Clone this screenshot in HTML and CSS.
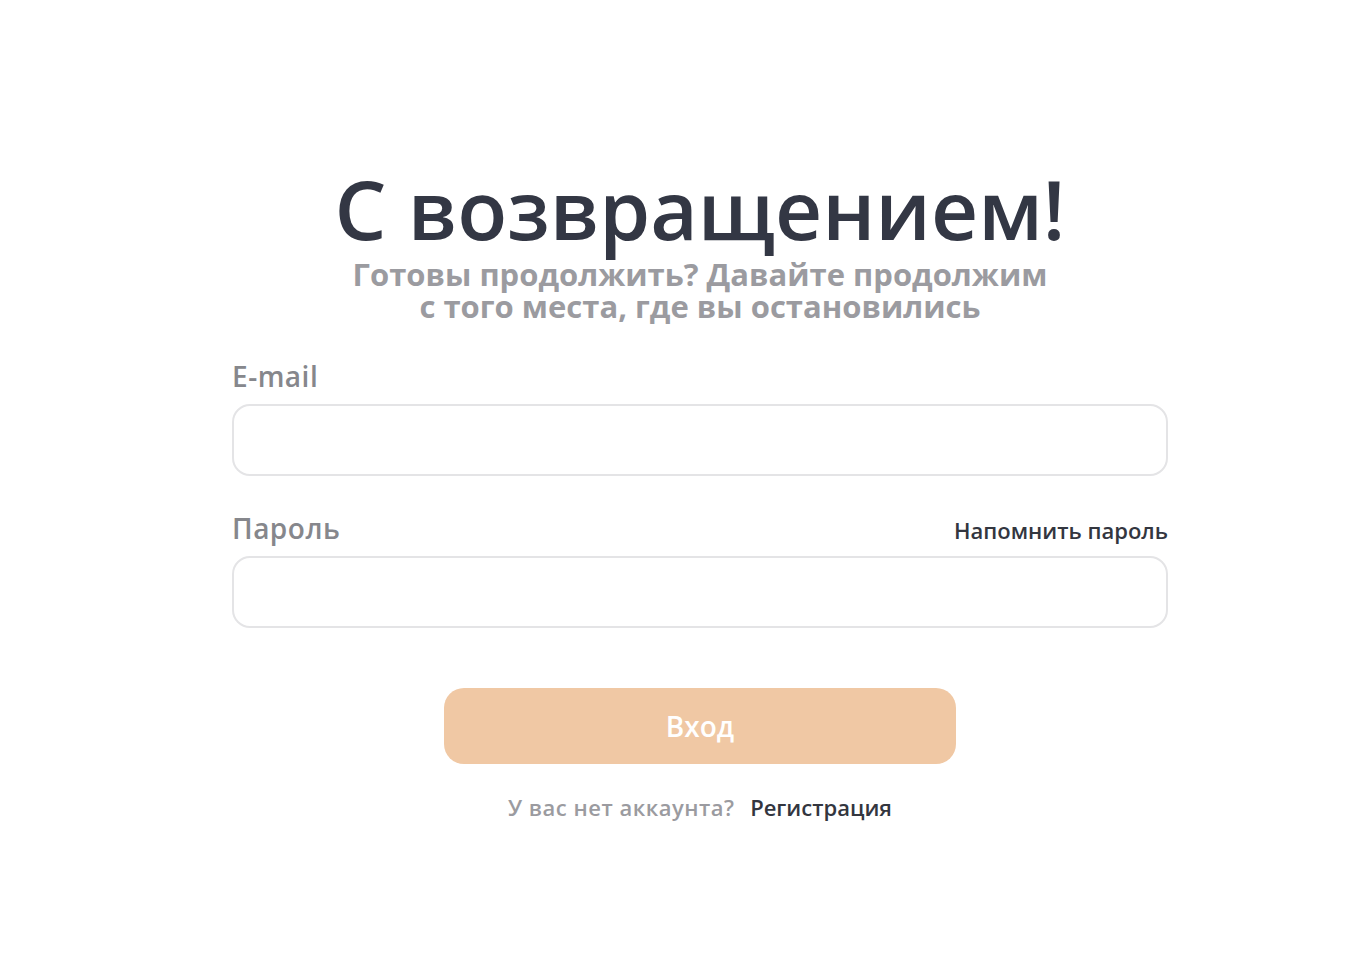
FILE: index.html
```html
<!DOCTYPE html>
<html>
<head>
  <title>Вход</title>
  <link rel="stylesheet" href="styles.css">
</head>
<body>
  <div class="page">
    <div class="login">
      <h1>С возвращением!</h1>
      <p class="subtitle">Готовы продолжить? Давайте продолжим<br>с того места, где вы остановились</p>

      <form class="login-form">
        <div class="field">
          <div class="field-head">
            <label for="email">E-mail</label>
          </div>
          <input id="email" type="email">
        </div>

        <div class="field">
          <div class="field-head">
            <label for="password">Пароль</label>
            <a href="#" class="remind">Напомнить пароль</a>
          </div>
          <input id="password" type="password">
        </div>

        <button type="button" class="submit">Вход</button>

        <div class="signup">
          <span>У вас нет аккаунта?</span>
          <a href="#">Регистрация</a>
        </div>
      </form>
    </div>
  </div>
</body>
</html>
```

FILE: styles.css
```css
body {
  margin: 0;
  font-family: "Open Sans", "Noto Sans", sans-serif;
  background-color: #fff;
  color: #333744;
}
.page {
  padding: 163px 0 0 42px;
  display: flex;
  justify-content: center;
}
.login {
  width: 936px;
  display: flex;
  flex-direction: column;
  align-items: center;
}
h1 {
  margin: 0;
  font-size: 82px;
  font-weight: 600;
  line-height: 90px;
  color: #333744;
}
.subtitle {
  margin: 5px 0 0;
  font-size: 31px;
  font-weight: 700;
  line-height: 32px;
  color: #9b9ba0;
  text-align: center;
}
.login-form {
  width: 100%;
  margin-top: 35px;
  display: flex;
  flex-direction: column;
}
.field {
  margin-bottom: 33px;
}
.field-head {
  display: flex;
  justify-content: space-between;
  align-items: baseline;
  margin-bottom: 9px;
}
.field-head label {
  font-size: 28px;
  font-weight: 600;
  letter-spacing: 0.5px;
  color: #86878c;
}
.remind {
  font-size: 22px;
  font-weight: 600;
  color: #33363f;
  text-decoration: none;
}
.field input {
  display: block;
  box-sizing: border-box;
  width: 100%;
  height: 72px;
  border: 2px solid #e4e4e6;
  border-radius: 18px;
  background: #fff;
  outline: none;
}
.submit {
  align-self: center;
  width: 512px;
  height: 76px;
  margin-top: 27px;
  border: none;
  border-radius: 20px;
  background-color: #f0c8a4;
  color: #fff;
  font-family: inherit;
  font-size: 28px;
  font-weight: 600;
}
.signup {
  margin-top: 28px;
  text-align: center;
  font-size: 22px;
  font-weight: 600;
}
.signup span {
  color: #9b9ba0;
  margin-right: 10px;
  letter-spacing: 0.5px;
}
.signup a {
  color: #33363f;
  font-weight: 600;
  text-decoration: none;
}
```
